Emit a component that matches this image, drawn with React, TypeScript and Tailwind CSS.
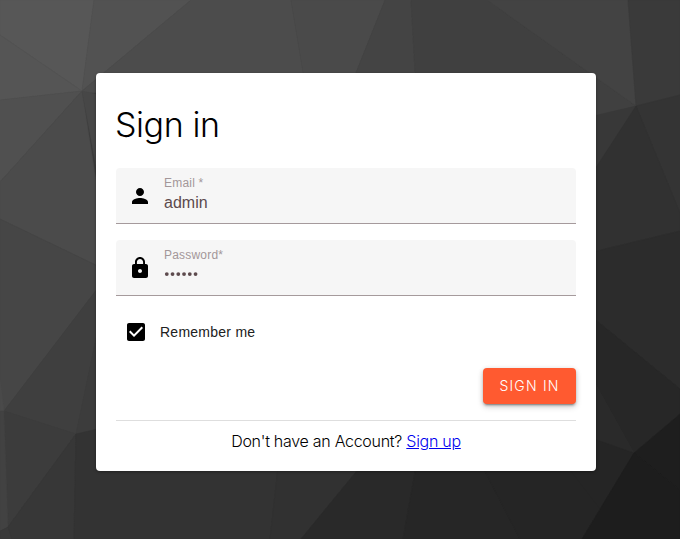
import React from "react";

type Facet = { points: string; fill: string };

// Facets of the low-poly backdrop, light at the top left and dark at the bottom right.
const facets: Facet[] = [
  { points: "0,0 94,0 82,91 0,35", fill: "#575757" },
  { points: "0,35 82,91 0,100", fill: "#555555" },
  { points: "94,0 191,0 82,91", fill: "#525252" },
  { points: "0,100 82,91 0,182", fill: "#505050" },
  { points: "191,0 291,0 306,90 84,93 82,91", fill: "#4c4c4c" },
  { points: "291,0 385,0 349,90 306,90", fill: "#4a4a4a" },
  { points: "385,0 411,0 416,90 349,90", fill: "#444444" },
  { points: "411,0 487,0 636,106 580,120 416,90", fill: "#404040" },
  { points: "487,0 628,0 636,106", fill: "#434343" },
  { points: "628,0 680,0 680,95 636,106", fill: "#3a3a3a" },
  { points: "0,182 82,91 110,270 96,265 0,219", fill: "#4b4b4b" },
  { points: "82,91 110,97 110,240", fill: "#474747" },
  { points: "0,219 110,272 4,411 0,411", fill: "#464646" },
  { points: "110,272 4,411 76,434", fill: "#3f3f3f" },
  { points: "110,272 110,430 76,434", fill: "#3c3c3c" },
  { points: "4,411 76,434 8,527", fill: "#3c3c3c" },
  { points: "0,380 4,411 0,411", fill: "#4a4a4a" },
  { points: "0,411 4,411 8,527 0,531", fill: "#424242" },
  { points: "0,531 8,527 12,539 0,539", fill: "#393939" },
  { points: "8,527 76,434 74,539 12,539", fill: "#373737" },
  { points: "76,434 110,426 280,450 270,539 74,539", fill: "#333333" },
  { points: "280,450 374,450 301,539 270,539", fill: "#313131" },
  { points: "374,450 419,450 403,539 301,539", fill: "#292929" },
  { points: "419,450 474,450 520,539 403,539", fill: "#262626" },
  { points: "474,450 634,453 582,539 520,539", fill: "#252525" },
  { points: "580,119 636,106 580,192", fill: "#383838" },
  { points: "636,106 680,95 680,213", fill: "#343434" },
  { points: "580,192 636,106 680,213 680,231 580,255", fill: "#313131" },
  { points: "580,255 680,231 680,389 580,307", fill: "#2c2c2c" },
  { points: "580,307 680,389 680,414 634,453 580,356", fill: "#272727" },
  { points: "580,356 634,453 580,434", fill: "#2a2a2a" },
  { points: "580,434 634,453 600,509 570,470", fill: "#252525" },
  { points: "634,453 680,414 680,490", fill: "#1e1e1e" },
  { points: "634,453 680,490 680,539 582,539", fill: "#1d1d1d" },
];

function Backdrop() {
  return (
    <svg className="absolute inset-0 h-full w-full" viewBox="0 0 680 539" preserveAspectRatio="none" aria-hidden="true">
      <rect width="680" height="539" fill="#3a3a3a" />
      {facets.map((f) => (
        <polygon key={f.points} points={f.points} fill={f.fill} stroke={f.fill} strokeWidth="0.5" />
      ))}
    </svg>
  );
}

function Icon({ d }: { d: string }) {
  return (
    <svg className="size-6 shrink-0" viewBox="0 0 24 24" fill="black" aria-hidden="true">
      <path d={d} />
    </svg>
  );
}

const PERSON = "M12 12c2.21 0 4-1.79 4-4s-1.79-4-4-4-4 1.79-4 4 1.79 4 4 4zm0 2c-2.67 0-8 1.34-8 4v2h16v-2c0-2.66-5.33-4-8-4z";
const LOCK =
  "M18 8h-1V6c0-2.76-2.24-5-5-5S7 3.24 7 6v2H6c-1.1 0-2 .9-2 2v10c0 1.1.9 2 2 2h12c1.1 0 2-.9 2-2V10c0-1.1-.9-2-2-2zm-6 9c-1.1 0-2-.9-2-2s.9-2 2-2 2 .9 2 2-.9 2-2 2zm3.1-9H8.9V6c0-1.71 1.39-3.1 3.1-3.1 1.71 0 3.1 1.39 3.1 3.1v2z";

function Field({ icon, label, children }: { icon: string; label: React.ReactNode; children: React.ReactNode }) {
  return (
    <div className="flex h-14 items-center gap-3 rounded-t border-b border-[#a59a9c] bg-[#f6f6f6] pl-3">
      <Icon d={icon} />
      <div className="flex h-full flex-col pt-2">
        <span className="text-xs leading-[15px] tracking-[0.2px] text-[#a39799]">{label}</span>
        {children}
      </div>
    </div>
  );
}

export default function App() {
  return (
    <main className="relative h-[539px] w-[680px] overflow-hidden font-['Liberation_Sans',Arial,sans-serif] text-black">
      <Backdrop />
      <section className="relative mt-[73px] ml-24 flex h-[398px] w-[500px] flex-col rounded bg-white px-5 shadow-[0_1px_3px_rgba(0,0,0,0.35)]">
        <h1 className="mt-8 -ml-px h-10 font-['Inter',sans-serif] text-[34px] leading-10 font-light tracking-[-0.4px]">Sign in</h1>
        <form className="mt-[23px] flex flex-col" onSubmit={(e) => e.preventDefault()}>
          <div className="flex flex-col gap-4">
            <Field icon={PERSON} label="Email *">
              <span className="text-base leading-6 text-[#5d4a4d]">admin</span>
            </Field>
            <Field icon={LOCK} label="Password*">
              <svg className="mt-[9px] h-[5px] w-9" viewBox="0 0 36 5" fill="#5d4a4d" role="img" aria-label="Password">
                {[0, 1, 2, 3, 4, 5].map((i) => (
                  <circle key={i} cx={2.8 + i * 5.75} cy="2.1" r="1.9" />
                ))}
              </svg>
            </Field>
          </div>
          <label className="mt-4 flex h-10 items-center pl-2">
            <Icon d="M19 3H5c-1.11 0-2 .9-2 2v14c0 1.1.89 2 2 2h14c1.11 0 2-.9 2-2V5c0-1.1-.89-2-2-2zm-9 14l-5-5 1.41-1.41L10 14.17l7.59-7.59L19 8l-9 9z" />
            <span className="ml-3 text-sm tracking-[0.25px] text-[#212121]">Remember me</span>
          </label>
          <button className="mt-4 h-9 w-[93px] self-end rounded bg-[#ff5a30] font-['Inter',sans-serif] text-sm font-[350] tracking-[1.2px] text-white shadow-[0_3px_1px_-2px_rgba(0,0,0,0.2),0_2px_2px_rgba(0,0,0,0.14),0_1px_5px_rgba(0,0,0,0.12),0_3px_6px_rgba(0,0,0,0.16)]">
            SIGN IN
          </button>
        </form>
        <p className="mt-4 border-t border-[#dedede] pt-2 text-center font-['Inter',sans-serif] text-base leading-6 font-light tracking-[-0.28px]">
          Don't have an Account?{" "}
          <a className="text-[#0000ee] underline" href="#signup">
            Sign up
          </a>
        </p>
      </section>
    </main>
  );
}
